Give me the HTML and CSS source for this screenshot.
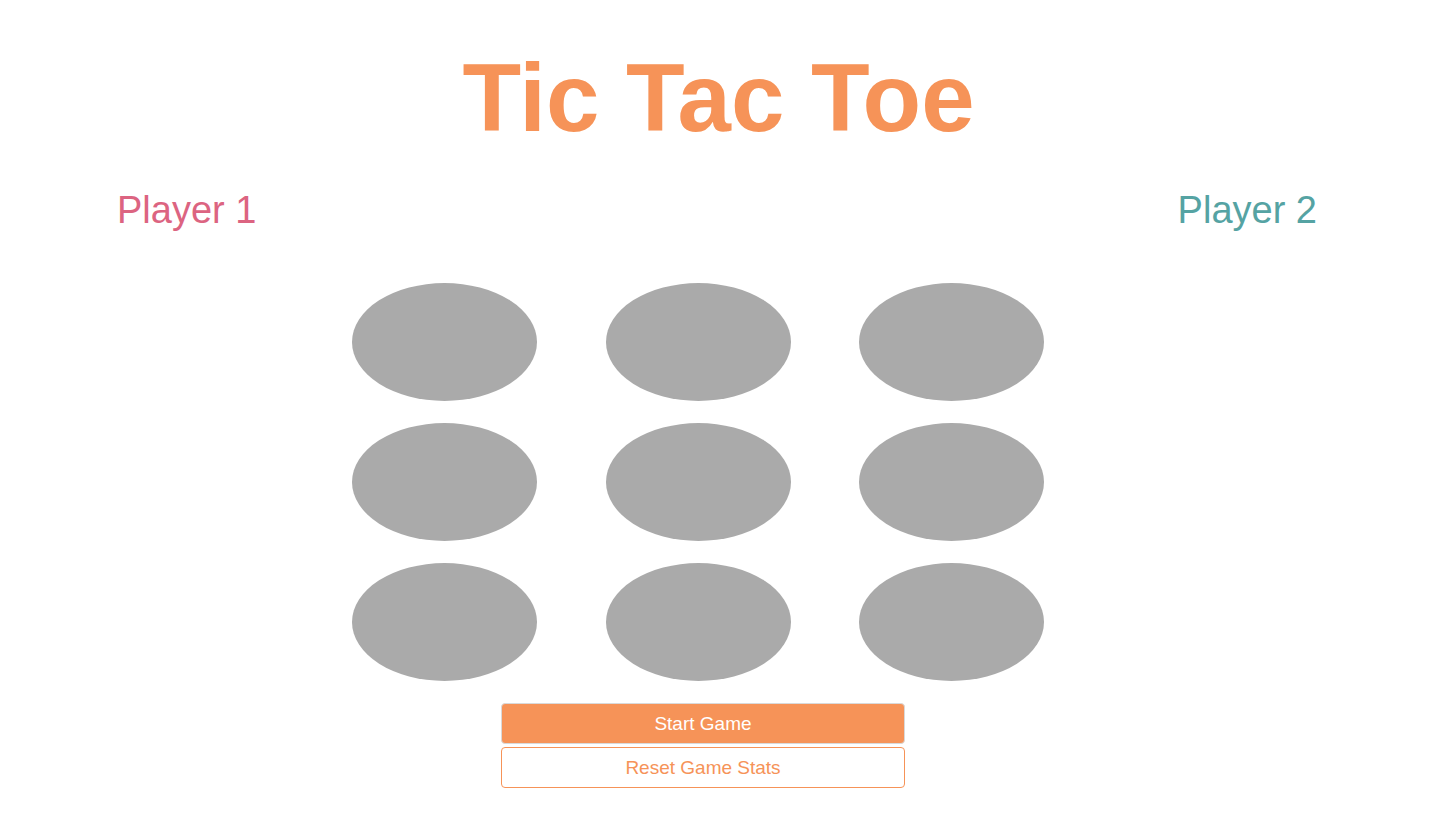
FILE: index.html
```html
<!DOCTYPE html>
<html lang="en">
<head>
  <meta charset="UTF-8">
  <meta name="viewport" content="width=device-width, initial-scale=1.0">
  <title>Tic Tac Toe</title>
  <link rel="stylesheet" href="styles.css">
</head>
<body>
  <h1 class="title">Tic Tac Toe</h1>

  <div class="players">
    <div class="player player-one">Player 1</div>
    <div class="player player-two">Player 2</div>
  </div>

  <div class="board-wrap">
    <div class="board">
      <div class="cell"></div>
      <div class="cell"></div>
      <div class="cell"></div>
      <div class="cell"></div>
      <div class="cell"></div>
      <div class="cell"></div>
      <div class="cell"></div>
      <div class="cell"></div>
      <div class="cell"></div>
    </div>
  </div>

  <div class="controls">
    <button class="btn btn-start">Start Game</button>
    <button class="btn btn-reset">Reset Game Stats</button>
  </div>
</body>
</html>
```

FILE: styles.css
```css
body {
  margin: 0;
  font-family: "Liberation Sans", Arial, Helvetica, sans-serif;
  background: #fff;
}
.title {
  margin: 50px 0 0;
  font-size: 96px;
  line-height: 1;
  font-weight: bold;
  text-align: center;
  color: #f69358;
}
.players {
  display: flex;
  justify-content: space-between;
  margin-top: 45px;
  padding: 0 120px 0 117px;
}
.player {
  font-size: 38px;
  line-height: 1;
}
.player-one {
  color: #dc6481;
}
.player-two {
  color: #55a3a3;
}
.board-wrap {
  display: flex;
  justify-content: center;
  padding-right: 41px;
  margin-top: 54px;
}
.board {
  display: grid;
  grid-template-columns: repeat(3, 185px);
  grid-auto-rows: 118px;
  column-gap: 68.5px;
  row-gap: 22px;
}
.cell {
  background: #aaaaaa;
  border-radius: 50%;
}
.controls {
  display: flex;
  flex-direction: column;
  align-items: center;
  gap: 3px;
  margin-top: 22px;
  padding-right: 31px;
}
.btn {
  width: 404px;
  height: 41px;
  border-radius: 4px;
  font-family: "Liberation Sans", Arial, Helvetica, sans-serif;
  font-size: 19px;
  cursor: pointer;
}
.btn-start {
  background: #f69358;
  border: 1px solid #d9d9d9;
  color: #fff;
}
.btn-reset {
  background: #fff;
  border: 1px solid #f69358;
  color: #f69358;
}
```
